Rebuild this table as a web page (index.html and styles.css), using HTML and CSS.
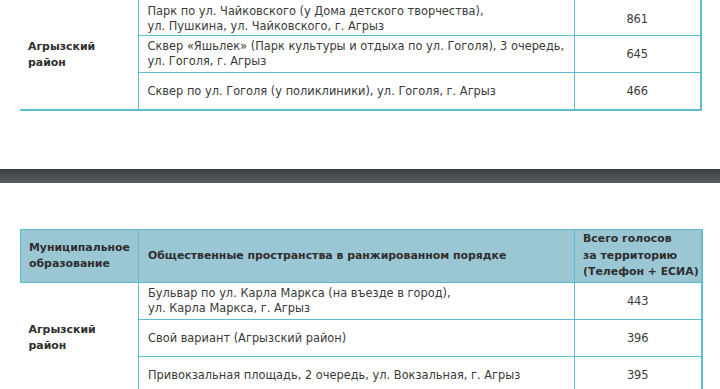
FILE: index.html
```html
<!DOCTYPE html>
<html lang="ru">
<head>
<meta charset="utf-8">
<link rel="stylesheet" href="styles.css">
</head>
<body>
<section class="page page-top">
  <table class="grid grid-open">
    <colgroup><col class="c1"><col class="c2"><col class="c3"></colgroup>
    <tbody>
      <tr class="first">
        <td class="muni" rowspan="3">Агрызский<br>район</td>
        <td class="place">Парк по ул. Чайковского (у Дома детского творчества),<br>ул. Пушкина, ул. Чайковского, г. Агрыз</td>
        <td class="num">861</td>
      </tr>
      <tr>
        <td class="place">Сквер «Яшьлек» (Парк культуры и отдыха по ул. Гоголя), 3 очередь,<br>ул. Гоголя, г. Агрыз</td>
        <td class="num">645</td>
      </tr>
      <tr class="last">
        <td class="place">Сквер по ул. Гоголя (у поликлиники), ул. Гоголя, г. Агрыз</td>
        <td class="num">466</td>
      </tr>
    </tbody>
  </table>
</section>
<div class="divider"></div>
<section class="page page-bottom">
  <table class="grid">
    <colgroup><col class="c1"><col class="c2"><col class="c3"></colgroup>
    <thead>
      <tr>
        <th class="h1">Муниципальное<br>образование</th>
        <th class="h2">Общественные пространства в ранжированном порядке</th>
        <th class="h3">Всего голосов<br>за территорию<br>(Телефон + ЕСИА)</th>
      </tr>
    </thead>
    <tbody>
      <tr>
        <td class="muni" rowspan="3">Агрызский<br>район</td>
        <td class="place">Бульвар по ул. Карла Маркса (на въезде в город),<br>ул. Карла Маркса, г. Агрыз</td>
        <td class="num">443</td>
      </tr>
      <tr>
        <td class="place">Свой вариант (Агрызский район)</td>
        <td class="num">396</td>
      </tr>
      <tr>
        <td class="place">Привокзальная площадь, 2 очередь, ул. Вокзальная, г. Агрыз</td>
        <td class="num">395</td>
      </tr>
    </tbody>
  </table>
</section>
</body>
</html>
```
FILE: styles.css
```css
html, body {
  margin: 0;
  padding: 0;
  background: #ffffff;
}
body {
  width: 720px;
  height: 389px;
  overflow: hidden;
  font-family: "DejaVu Sans", "Noto Sans", sans-serif;
  color: #3a3a3a;
  font-size: 11.4px;
}
.page {
  padding-left: 20px;
}
.grid {
  border-collapse: collapse;
  table-layout: fixed;
  width: 681px;
}
.c1 { width: 118px; }
.c2 { width: 436px; }
.c3 { width: 127px; }
.grid td, .grid th {
  border: 1px solid #5cbcd0;
  padding: 0;
  line-height: 15px;
  vertical-align: middle;
}
.grid tr > :last-child {
  border-right: 2px solid #5cbcd0;
}
.grid td.muni {
  border-left: none;
  font-weight: 700;
  font-size: 10.9px;
  padding-left: 8px;
  line-height: 16px;
  color: #2e2e2e;
}
.grid td.place {
  height: 36px;
  padding-left: 9px;
}
.grid-open tr.first td.place,
.grid-open tr.first td.num {
  height: 31px;
  padding-top: 4px;
  vertical-align: top;
}
.grid-open tr.first td.num {
  padding-top: 12px;
  height: 23px;
}
.grid td.num {
  text-align: center;
}
.grid-open tr:first-child td {
  border-top: none;
}
.grid-open tr.last td,
.grid-open td.muni {
  border-bottom: 2px solid #5cbcd0;
}
.divider {
  margin-top: 58px;
  height: 14px;
  background: linear-gradient(#3b3e41, #4a4d50 40%, #565a5d);
}
.page-bottom {
  margin-top: 46px;
}
.grid thead th {
  background: #9bc7d5;
  font-weight: 700;
  font-size: 10.9px;
  text-align: left;
  color: #2e2e2e;
  height: 52px;
  line-height: 16.5px;
}
.grid th.h1 { padding-left: 8px; }
.grid th.h2 { padding-left: 9px; }
.grid th.h3 { padding-left: 8px; }
```
